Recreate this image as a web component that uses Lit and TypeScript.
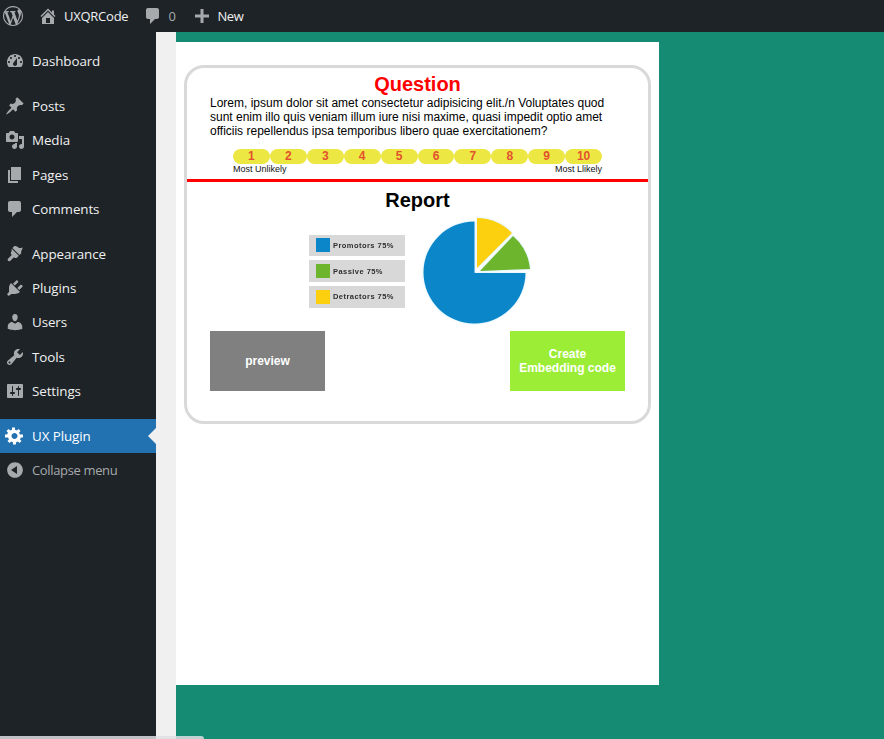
import { LitElement, html, css } from 'lit';
import { customElement } from 'lit/decorators.js';

// dashicons, 20x20 box
const ICONS: Record<string, string> = {
  wp: 'M20 10c0-5.510-4.490-10-10-10C4.480 0 0 4.490 0 10c0 5.520 4.480 10 10 10 5.510 0 10-4.480 10-10zM7.780 15.370L4.370 6.220c.55-.02 1.170-.08 1.170-.08.5-.06.44-1.130-.06-1.110 0 0-1.450.11-2.370.11-.18 0-.37 0-.58-.01C4.120 2.690 6.870 1.190 10 1.190c2.330 0 4.450.87 6.060 2.340-.68-.11-1.650.39-1.650 1.580 0 .74.45 1.360.9 2.100.35.61.55 1.360.55 2.460 0 1.490-1.400 5-1.400 5l-3.030-8.370c.54-.02.82-.17.82-.17.5-.05.44-1.250-.06-1.220 0 0-1.440.12-2.380.12-.87 0-2.330-.12-2.330-.12-.5-.03-.56 1.200-.06 1.220l.92.08 1.260 3.410zM17.410 10c.24-.64.74-1.870.43-4.250.7 1.290 1.050 2.710 1.050 4.250 0 3.290-1.730 6.240-4.480 7.820.97-2.600 1.940-5.210 3-7.820zM6.100 18.090C3.120 16.650 1.110 13.530 1.110 10c0-1.300.23-2.480.72-3.590C3.250 10.300 4.670 14.200 6.100 18.090zm4.030-6.630l2.580 6.980c-.86.29-1.760.45-2.710.45-.79 0-1.570-.11-2.290-.33.81-2.380 1.620-4.740 2.420-7.100z',
  home: 'M16 8.500l1.530 1.530-1.060 1.060L10 4.620l-6.470 6.470-1.060-1.060L10 2.500l4 4v-2h2v4zm-6-2.460l6 5.990V18H4v-5.970zM12 17v-5H8v5h4z',
  comment: 'M5 2h9c1.100 0 2 .9 2 2v7c0 1.100-.9 2-2 2h-2l-5 5v-5H5c-1.100 0-2-.9-2-2V4c0-1.100.9-2 2-2z',
  plus: 'M17 8.500v3h-5.500V17h-3v-5.500H3v-3h5.500V3h3v5.500z',
  dashboard: 'M3.760 16h12.480c1.100-1.370 1.760-3.110 1.760-5 0-4.420-3.580-8-8-8s-8 3.580-8 8c0 1.890.66 3.630 1.760 5zM10 4c.55 0 1 .45 1 1s-.45 1-1 1-1-.45-1-1 .45-1 1-1zM6 6c.55 0 1 .45 1 1s-.45 1-1 1-1-.45-1-1 .45-1 1-1zm8 0c.55 0 1 .45 1 1s-.45 1-1 1-1-.45-1-1 .45-1 1-1zm-5.370 5.550L12 7v6c0 1.100-.9 2-2 2s-2-.9-2-2c0-.57.24-1.080.63-1.450zM4 10c.55 0 1 .45 1 1s-.45 1-1 1-1-.45-1-1 .45-1 1-1zm12 0c.55 0 1 .45 1 1s-.45 1-1 1-1-.45-1-1 .45-1 1-1z',
  post: 'M10.440 3.020l1.820-1.820 6.360 6.350-1.830 1.820c-1.050-.68-2.480-.57-3.410.36l-.75.75c-.92.93-1.040 2.350-.35 3.410l-1.830 1.820-2.410-2.410-2.800 2.790c-.42.42-3.380 2.710-3.800 2.290s1.860-3.390 2.280-3.810l2.790-2.790L4.100 9.360l1.830-1.820c1.050.69 2.480.57 3.400-.36l.75-.75c.93-.92 1.050-2.350.36-3.410z',
  media: 'M13 11V4c0-.55-.45-1-1-1h-1.670L9 1H5L3.670 3H2c-.55 0-1 .45-1 1v7c0 .55.45 1 1 1h10c.55 0 1-.45 1-1zM7 4.500c1.380 0 2.500 1.120 2.500 2.500S8.380 9.500 7 9.500 4.500 8.380 4.500 7 5.620 4.500 7 4.500zM14 6h5v10.500c0 1.380-1.120 2.500-2.500 2.500S14 17.880 14 16.500s1.120-2.500 2.500-2.500c.17 0 .34.020.5.050V9h-3V6zm-4 8.050V13h2v3.500c0 1.380-1.120 2.500-2.500 2.500S7 17.880 7 16.500 8.120 14 9.500 14c.17 0 .34.020.5.050z',
  page: 'M6 15V2h10v13H6zm-1 1h8v2H3V5h2v11z',
  appearance: 'M14.500 11L7.400 4l1.500-1.500c.6-.6 2.300-.5 3.500.3 1.200.8 1.400 1.300 2.700 1.300 1.200 0 2.500-.9 2.500-.9s-.1 1.500-.8 2.800c-.5 1-.9 1.500-.5 3.200L14.500 11zM6.700 4.700l7.100 7.100-1.600 1.600c-.9.9-2.200.9-3 .1l-.3-.3-3.500 3.500c-.7.7-1.700.7-2.300.1-.7-.7-.6-1.700.1-2.400l3.500-3.500-.3-.3c-.8-.8-.8-2.100.1-3L6.700 4.700z',
  plugin: 'M13.110 4.360L9.870 7.600 8 5.730l3.240-3.240c.35-.34 1.050-.2 1.560.32.520.51.660 1.210.31 1.550zm-8 1.770l.91-1.120 9.010 9.010-1.190.84c-.71.710-2.630 1.160-3.820 1.160H6.140L4.900 17.260c-.59.590-1.540.59-2.120 0-.59-.58-.59-1.530 0-2.120l1.240-1.240v-3.880c0-1.130.4-3.050 1.110-3.760zm7.260 3.970l3.240-3.240c.34-.35 1.040-.21 1.550.31.520.51.660 1.210.31 1.550l-3.240 3.250z',
  users: 'M10 9.250c-2.270 0-2.730-3.440-2.730-3.440C7 4.020 7.820 2 9.970 2c2.160 0 2.980 2.020 2.710 3.810 0 0-.41 3.440-2.680 3.440zm0 2.570L12.720 10c2.390 0 4.520 2.330 4.520 4.530v2.490s-3.650 1.130-7.240 1.130c-3.650 0-7.240-1.130-7.240-1.130v-2.490c0-2.250 1.940-4.480 4.470-4.480z',
  tools: 'M16.680 9.770c-1.340 1.340-3.300 1.670-4.950.99l-5.410 6.520c-.99.99-2.590.99-3.580 0s-.99-2.590 0-3.570l6.520-5.420c-.68-1.650-.35-3.610.99-4.950 1.280-1.280 3.120-1.620 4.720-1.060l-2.890 2.890 2.820 2.820 2.860-2.870c.53 1.580.18 3.420-1.080 4.670zM3.810 16.210c.4.390 1.040.39 1.430 0 .4-.4.400-1.040 0-1.430-.39-.4-1.030-.4-1.430 0-.39.39-.39 1.030 0 1.430z',
  settings: 'M18 16V4c0-.55-.45-1-1-1H3c-.55 0-1 .45-1 1v12c0 .55.45 1 1 1h14c.55 0 1-.45 1-1zM8 11h1c.55 0 1 .45 1 1s-.45 1-1 1H8v1.500c0 .28-.22.5-.5.5s-.5-.22-.5-.5V13H6c-.55 0-1-.45-1-1s.45-1 1-1h1V5.500c0-.28.22-.5.5-.5s.5.22.5.5V11zm5-2h-1c-.55 0-1-.45-1-1s.45-1 1-1h1V5.500c0-.28.22-.5.5-.5s.5.22.5.5V7h1c.55 0 1 .45 1 1s-.45 1-1 1h-1v5.500c0 .28-.22.5-.5.5s-.5-.22-.5-.5V9z',
  gear: 'M18 11.500h-2.180c-.17.7-.44 1.350-.81 1.930l1.540 1.540-2.100 2.100-1.540-1.540c-.58.36-1.230.64-1.910.81v2.160h-3v-2.180c-.68-.17-1.330-.44-1.910-.81l-1.540 1.540-2.120-2.120 1.540-1.540c-.36-.58-.63-1.230-.79-1.890H0v-3h2.180c.16-.68.42-1.330.79-1.910L1.430 5.050l2.120-2.120 1.540 1.540c.58-.37 1.230-.64 1.910-.8V1.500h3v2.180c.68.16 1.330.43 1.910.8l1.540-1.540 2.120 2.120-1.540 1.540c.36.58.63 1.230.79 1.900H18zM9.500 13c1.660 0 3-1.340 3-3s-1.340-3-3-3-3 1.340-3 3 1.340 3 3 3z',
  collapse: 'M10 2.160c4.330 0 7.840 3.510 7.840 7.840s-3.510 7.840-7.840 7.840S2.160 14.330 2.160 10 5.670 2.160 10 2.160zM12 14V6l-6 4z',
};

const icon = (name: string) =>
  html`<svg class="ico" viewBox="0 0 20 20"><path fill-rule="evenodd" d=${ICONS[name]}></path></svg>`;

const MENU = [
  { label: 'Dashboard', icon: 'dashboard', sep: 'sep' },
  { label: 'Posts', icon: 'post' },
  { label: 'Media', icon: 'media' },
  { label: 'Pages', icon: 'page' },
  { label: 'Comments', icon: 'comment', sep: 'sep tight' },
  { label: 'Appearance', icon: 'appearance' },
  { label: 'Plugins', icon: 'plugin' },
  { label: 'Users', icon: 'users' },
  { label: 'Tools', icon: 'tools' },
  { label: 'Settings', icon: 'settings', sep: 'sep' },
];

const LEGEND = [
  { label: 'Promotors 75%', color: '#0b86c9' },
  { label: 'Passive 75%', color: '#6cb52d' },
  { label: 'Detractors 75%', color: '#fdd00f' },
];

@customElement('app-root')
export class AppRoot extends LitElement {
  static styles = css`
    :host {
      display: block;
      width: 100%;
      height: 739px;
      overflow: hidden;
      position: relative;
      font-family: 'Open Sans', 'Noto Sans', sans-serif;
      background: #f0f0f1;
    }

    .ico {
      display: block;
      width: 20px;
      height: 20px;
      fill: currentColor;
    }

    /* admin bar */
    .topbar {
      height: 32px;
      background: #1d2327;
      color: #f0f0f1;
      display: flex;
      align-items: center;
      font-size: 13px;
      letter-spacing: -0.25px;
    }
    .topbar .ico { color: #a7aaad; }
    .wp { margin-left: 3px; }
    .home { display: flex; align-items: center; gap: 6px; margin-left: 15px; }
    .bubble { display: flex; align-items: center; gap: 5px; margin-left: 15px; color: #a7aaad; }
    .new { display: flex; align-items: center; gap: 6px; margin-left: 16px; letter-spacing: -0.5px; }

    .body {
      display: flex;
      height: 707px;
    }

    /* sidebar */
    .sidebar {
      width: 156px;
      flex: none;
      background: #1d2327;
      padding-top: 11.8px;
      box-sizing: border-box;
    }
    .item {
      position: relative;
      height: 34.33px;
      display: flex;
      align-items: center;
      gap: 7px;
      padding-left: 5px;
      color: #f0f0f1;
      font-size: 13.4px;
      letter-spacing: -0.1px;
    }
    .item .ico { color: #a7aaad; }
    .item.sep { margin-bottom: 10.7px; }
    .item.sep.tight { margin-bottom: 10.5px; }
    .item.active { background: #2271b1; color: #fff; }
    .item.active .ico { color: #fff; }
    .item.active::after {
      content: '';
      position: absolute;
      right: 0;
      top: 50%;
      margin-top: -8px;
      border: 8px solid transparent;
      border-left-width: 0;
      border-right-color: #f0f0f1;
    }
    .item.muted { color: #a7aaad; font-size: 13px; letter-spacing: -0.35px; }

    /* page */
    .gutter { width: 20px; flex: none; background: #f0f0f1; }
    .main {
      flex: 1;
      background: #168b73;
      padding-top: 10px;
    }
    .sheet {
      width: 483px;
      height: 643px;
      background: #fff;
      padding: 23px 8px 0;
      box-sizing: border-box;
      font-family: 'Liberation Sans', Arial, sans-serif;
    }
    .card {
      border: 3px solid #d9d9d9;
      border-radius: 20px;
      height: 359px;
      box-sizing: border-box;
    }

    .question { height: 111px; padding: 4px 23px 0; box-sizing: border-box; }
    h2 {
      margin: 0;
      font-size: 20px;
      line-height: 24px;
      font-weight: 700;
      text-align: center;
    }
    .question h2 { color: #f00; }
    .question p {
      margin: 0;
      font-size: 12px;
      line-height: 14px;
      color: #000;
    }
    .scale-wrap { width: 369px; margin: 11px 0 0 23px; }
    .scale { display: flex; }
    .scale span {
      flex: 1;
      height: 15px;
      line-height: 15px;
      border-radius: 8px;
      background: #ede743;
      color: #e2522e;
      font-size: 12px;
      font-weight: 700;
      text-align: center;
    }
    .ends {
      display: flex;
      justify-content: space-between;
      font-size: 9px;
      line-height: 10px;
      color: #111;
    }

    .rule { height: 3px; background: #f00; }

    .report { padding: 6px 23px 0; }
    .chart {
      height: 120px;
      margin-top: 1px;
      display: flex;
      align-items: flex-start;
      padding-left: 99px;
    }
    .legend {
      width: 96px;
      margin-top: 21.5px;
      display: flex;
      flex-direction: column;
      gap: 4.25px;
      filter: blur(0.5px);
    }
    .legend div {
      height: 21.5px;
      background: #d8d8d8;
      display: flex;
      align-items: center;
      gap: 3px;
      padding-left: 7px;
      font-size: 7.5px;
      letter-spacing: 0.45px;
      font-weight: 700;
      color: #2e2e2e;
    }
    .legend i { width: 14px; height: 14px; flex: none; }
    .pie {
      width: 120px;
      height: 120px;
      margin-left: 10px;
      filter: blur(0.5px) drop-shadow(0 0 1px #c4ecff);
    }

    .actions { display: flex; justify-content: space-between; margin-top: -2px; }
    .btn {
      width: 115px;
      height: 60px;
      display: flex;
      align-items: center;
      justify-content: center;
      text-align: center;
      color: #fff;
      font-size: 12px;
      line-height: 14px;
      font-weight: 700;
    }
    .btn.grey { background: #808080; }
    .btn.green { background: #9bed36; }

    .scrollbar {
      position: absolute;
      left: 0;
      bottom: 0;
      width: 204px;
      height: 3px;
      background: rgba(222, 222, 228, 0.85);
      border-top-right-radius: 3px;
    }
  `;

  private renderMenuItem(m: { label: string; icon: string; sep?: string }) {
    return html`<div class="item ${m.sep ?? ''}">${icon(m.icon)}<span>${m.label}</span></div>`;
  }

  render() {
    return html`
      <div class="topbar">
        <div class="wp">${icon('wp')}</div>
        <div class="home">${icon('home')}<span>UXQRCode</span></div>
        <div class="bubble">${icon('comment')}<span>0</span></div>
        <div class="new">${icon('plus')}<span>New</span></div>
      </div>
      <div class="body">
        <nav class="sidebar">
          ${MENU.map((m) => this.renderMenuItem(m))}
          <div class="item active">${icon('gear')}<span>UX Plugin</span></div>
          <div class="item muted">${icon('collapse')}<span>Collapse menu</span></div>
        </nav>
        <div class="gutter"></div>
        <main class="main">
          <div class="sheet">
            <div class="card">
              <section class="question">
                <h2>Question</h2>
                <p>Lorem, ipsum dolor sit amet consectetur adipisicing elit./n Voluptates quod sunt enim illo quis veniam illum iure nisi maxime, quasi impedit optio amet officiis repellendus ipsa temporibus libero quae exercitationem?</p>
                <div class="scale-wrap">
                  <div class="scale">
                    ${[1, 2, 3, 4, 5, 6, 7, 8, 9, 10].map((n) => html`<span>${n}</span>`)}
                  </div>
                  <div class="ends"><span>Most Unlikely</span><span>Most Llikely</span></div>
                </div>
              </section>
              <div class="rule"></div>
              <section class="report">
                <h2>Report</h2>
                <div class="chart">
                  <div class="legend">
                    ${LEGEND.map((l) => html`<div><i style="background:${l.color}"></i><span>${l.label}</span></div>`)}
                  </div>
                  <svg class="pie" viewBox="0 0 120 120">
                    <path d="M59.500 60V8.500A51 51 0 1 0 110.500 60Z" fill="#0b86c9"></path>
                    <path d="M62 55V5A50 50 0 0 1 97 20Z" fill="#fdd00f"></path>
                    <path d="M65 58L98 23A50 50 0 0 1 115 56Z" fill="#6cb52d"></path>
                  </svg>
                </div>
                <div class="actions">
                  <div class="btn grey">preview</div>
                  <div class="btn green">Create<br />Embedding code</div>
                </div>
              </section>
            </div>
          </div>
        </main>
      </div>
      <div class="scrollbar"></div>
    `;
  }
}
